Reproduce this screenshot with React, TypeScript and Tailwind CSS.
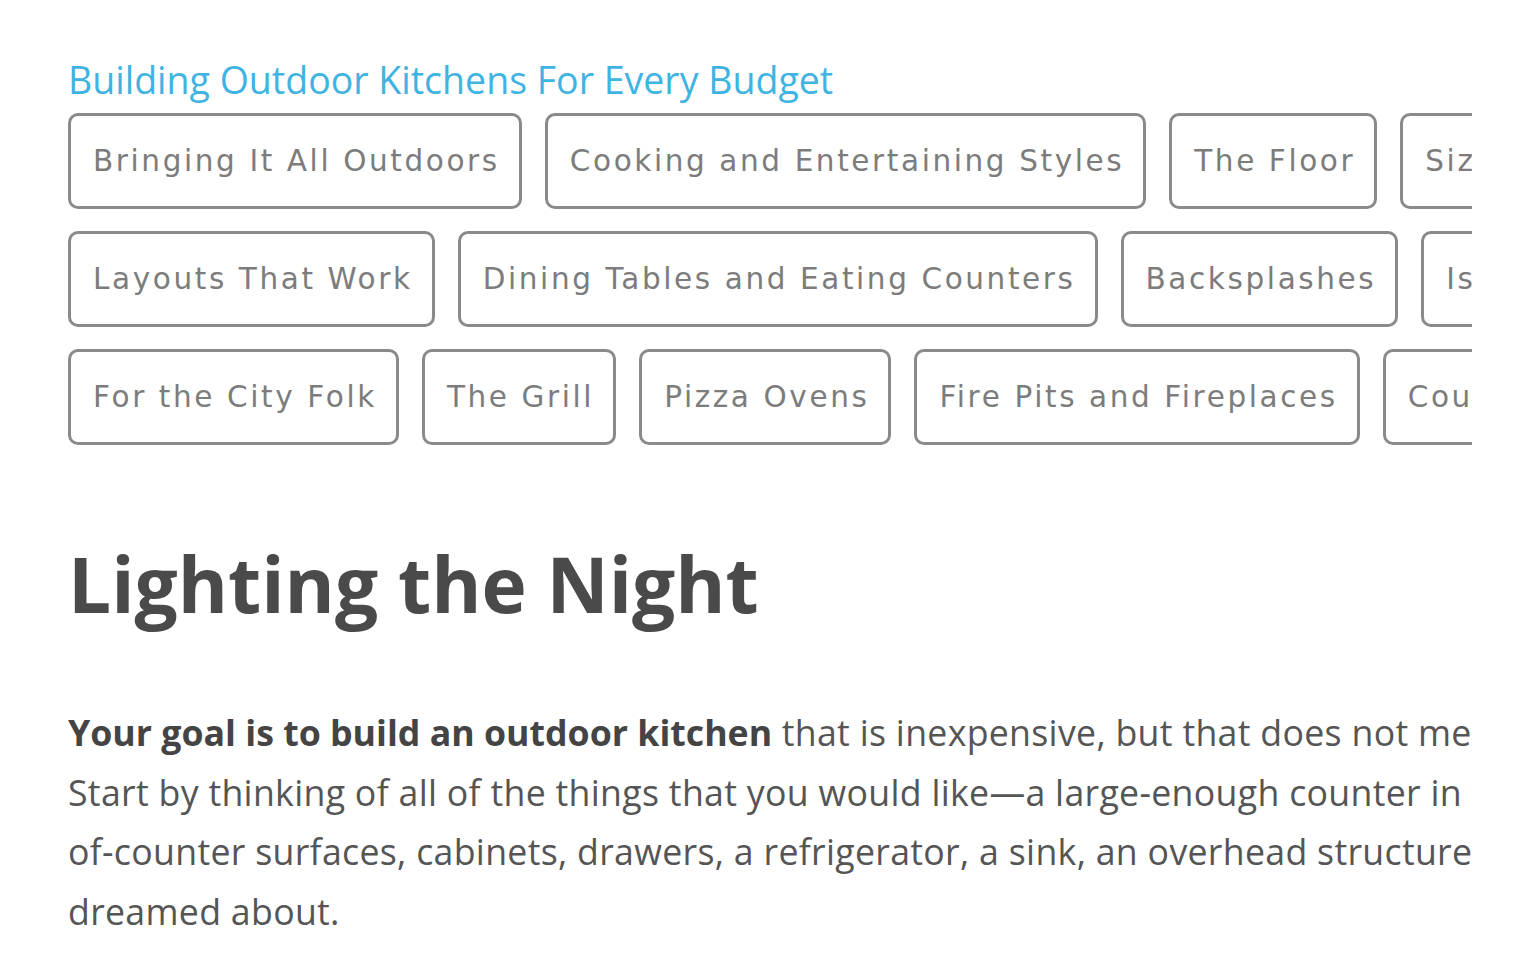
import React from "react";

const rows: string[][] = [
  ["Bringing It All Outdoors", "Cooking and Entertaining Styles", "The Floor", "Sizing It Up"],
  ["Layouts That Work", "Dining Tables and Eating Counters", "Backsplashes", "Islands"],
  ["For the City Folk", "The Grill", "Pizza Ovens", "Fire Pits and Fireplaces", "Countertops"],
];

function Pill({ label }: { label: string }) {
  return (
    <div className="shrink-0 border-[3px] border-[#8a8a8a] rounded-[10px] h-[96px] flex items-center pl-[22px] pr-[19px] text-[#7c7c7c] text-[29.5px] tracking-[2.6px] whitespace-nowrap [font-family:'DejaVu_Sans',Verdana,sans-serif]">
      {label}
    </div>
  );
}

export default function App() {
  return (
    <div className="w-[1523px] h-[965px] bg-white overflow-hidden">
      <div className="ml-[68px] w-[1404px] overflow-hidden pt-[57px]">
        <div className="text-[#3fb3e2] text-[37.5px] leading-[46px] whitespace-nowrap [font-family:'Open_Sans',Lato,sans-serif]">
          Building Outdoor Kitchens For Every Budget
        </div>
        <div className="mt-[10px] flex flex-col gap-[22px]">
          {rows.map((r, i) => (
            <div key={i} className="flex flex-nowrap gap-[23px]">
              {r.map((l) => (
                <Pill key={l} label={l} />
              ))}
            </div>
          ))}
        </div>
        <h1 className="mt-[90px] text-[#4a4a4a] font-bold text-[76.5px] leading-[96px] whitespace-nowrap [font-variant-ligatures:none] [font-family:'Open_Sans',Lato,sans-serif]">
          Lighting the Night
        </h1>
        <div className="mt-[72px] text-[#555555] text-[35.7px] tracking-[0.3px] leading-[59.5px] whitespace-nowrap [font-family:'Open_Sans',Lato,sans-serif]">
          <div>
            <span className="font-bold text-[#444444] tracking-[0px]">Your goal is to build an outdoor kitchen</span> that is inexpensive, but that does not mean you have to give up the features you want.
          </div>
          <div>Start by thinking of all of the things that you would like—a large-enough counter in front of the grill, plenty of out-</div>
          <div>of-counter surfaces, cabinets, drawers, a refrigerator, a sink, an overhead structure, and anything else you have</div>
          <div>dreamed about.</div>
        </div>
      </div>
    </div>
  );
}
